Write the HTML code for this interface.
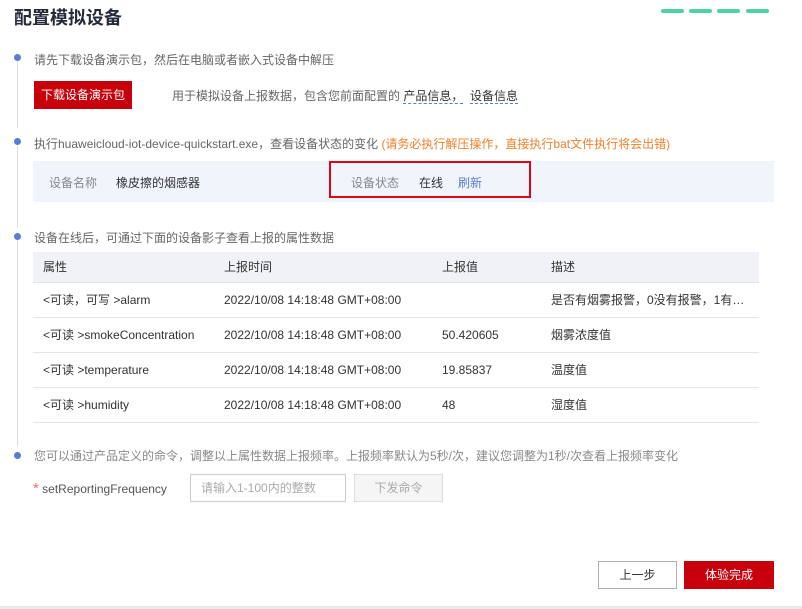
<!DOCTYPE html>
<html><head><meta charset="utf-8"><style>
*{margin:0;padding:0;box-sizing:border-box}
body{width:802px;height:609px;background:#fff;font-family:"Liberation Sans","Noto Sans CJK SC",sans-serif;font-size:12px;color:#333;position:relative;overflow:hidden}
.a{position:absolute;white-space:nowrap}
.dot{position:absolute;left:14px;width:7px;height:7px;border-radius:50%;background:#5b7bd5}
.line{position:absolute;left:17px;width:1px;background:#ddd}
.g{color:#666}
.dash{position:absolute;top:9px;width:23px;height:4px;border-radius:2px;background:#4fd1a6}
table{position:absolute;left:33px;top:252px;width:726px;border-collapse:collapse}
td,th{height:35px;padding-left:10px;text-align:left;font-weight:normal;border-bottom:1px solid #e5e5e5;font-size:12px;color:#333}
th{height:30px;background:#f0f2f7}
</style></head><body>
<div class="a" style="left:14px;top:4px;font-size:18px;font-weight:bold;color:#252b3a">配置模拟设备</div>
<div class="dash" style="left:661px"></div><div class="dash" style="left:689px"></div><div class="dash" style="left:717px"></div><div class="dash" style="left:746px"></div>

<div class="line" style="top:60px;height:68px"></div>
<div class="line" style="top:146px;height:82px"></div>
<div class="line" style="top:240px;height:206px"></div>
<div class="dot" style="top:54px"></div>
<div class="dot" style="top:138px"></div>
<div class="dot" style="top:233px"></div>
<div class="dot" style="top:452px"></div>

<div class="a g" style="left:34px;top:51px">请先下载设备演示包，然后在电脑或者嵌入式设备中解压</div>
<div class="a" style="left:34px;top:81px;width:98px;height:28px;background:#c7000b;color:#fff;text-align:center;line-height:28px">下载设备演示包</div>
<div class="a g" style="left:172px;top:87px">用于模拟设备上报数据，包含您前面配置的 <span style="color:#333;border-bottom:1px dashed #5b7bd5">产品信息，</span> &nbsp;<span style="color:#333;border-bottom:1px dashed #5b7bd5">设备信息</span></div>

<div class="a g" style="left:34px;top:135px">执行huaweicloud-iot-device-quickstart.exe，查看设备状态的变化 <span style="color:#f0802b">(请务必执行解压操作，直接执行bat文件执行将会出错)</span></div>
<div class="a" style="left:33px;top:161px;width:741px;height:41px;background:#f0f4fb"></div>
<div class="a" style="left:49px;top:174px;color:#888">设备名称</div>
<div class="a" style="left:116px;top:174px">橡皮擦的烟感器</div>
<div class="a" style="left:351px;top:174px;color:#888">设备状态</div>
<div class="a" style="left:419px;top:174px">在线</div>
<div class="a" style="left:458px;top:174px;color:#5b7bd5">刷新</div>
<div class="a" style="left:329px;top:161px;width:202px;height:37px;border:2px solid #e2001a"></div>

<div class="a g" style="left:34px;top:229px">设备在线后，可通过下面的设备影子查看上报的属性数据</div>
<table>
<tr><th style="width:181px">属性</th><th style="width:218px">上报时间</th><th style="width:109px">上报值</th><th>描述</th></tr>
<tr><td>&lt;可读，可写 &gt;alarm</td><td>2022/10/08 14:18:48 GMT+08:00</td><td></td><td>是否有烟雾报警，0没有报警，1有…</td></tr>
<tr><td>&lt;可读 &gt;smokeConcentration</td><td>2022/10/08 14:18:48 GMT+08:00</td><td>50.420605</td><td>烟雾浓度值</td></tr>
<tr><td>&lt;可读 &gt;temperature</td><td>2022/10/08 14:18:48 GMT+08:00</td><td>19.85837</td><td>温度值</td></tr>
<tr><td>&lt;可读 &gt;humidity</td><td>2022/10/08 14:18:48 GMT+08:00</td><td>48</td><td>湿度值</td></tr>
</table>

<div class="a g" style="left:34px;top:447px;color:#888">您可以通过产品定义的命令，调整以上属性数据上报频率。上报频率默认为5秒/次，建议您调整为1秒/次查看上报频率变化</div>
<div class="a" style="left:33px;top:480px;color:#555"><span style="color:#f56c6c;font-size:15px">*</span> setReportingFrequency</div>
<div class="a" style="left:190px;top:474px;width:156px;height:28px;border:1px solid #ccc;color:#aaa;padding-left:10px;line-height:26px">请输入1-100内的整数</div>
<div class="a" style="left:354px;top:474px;width:89px;height:28px;border:1px solid #ddd;background:#f5f5f5;color:#aaa;text-align:center;line-height:26px">下发命令</div>

<div class="a" style="left:598px;top:561px;width:79px;height:28px;border:1px solid #adb0b8;text-align:center;line-height:26px">上一步</div>
<div class="a" style="left:684px;top:561px;width:90px;height:28px;background:#c7000b;color:#fff;text-align:center;line-height:28px">体验完成</div>
<div class="a" style="left:0;top:606px;width:802px;height:3px;background:#e8e9ec"></div>
</body></html>
